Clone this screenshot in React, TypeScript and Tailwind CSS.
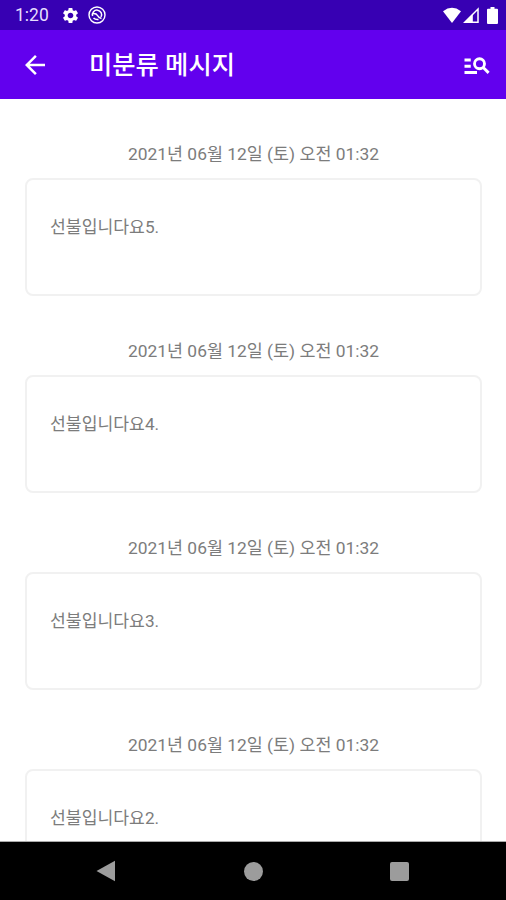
import { MdArrowBack, MdSettings } from 'react-icons/md';

type TMessage = {
    id: number;
    date: string;
    body: string;
};

const messages: TMessage[] = [
    { id: 5, date: '2021년 06월 12일 (토) 오전 01:32', body: '선불입니다요5.' },
    { id: 4, date: '2021년 06월 12일 (토) 오전 01:32', body: '선불입니다요4.' },
    { id: 3, date: '2021년 06월 12일 (토) 오전 01:32', body: '선불입니다요3.' },
    { id: 2, date: '2021년 06월 12일 (토) 오전 01:32', body: '선불입니다요2.' },
];

const StatusBar = () => {
    return (
        <div className="flex h-[30px] shrink-0 items-center bg-[#3700b3] pl-[15px] pr-2 text-white">
            <span className="w-[46px] pt-0.5 text-[17.5px] leading-none text-[#e6deff]">1:20</span>
            <MdSettings className="h-[19px] w-[19px]" />
            <svg className="ml-2 h-[18px] w-[18px]" viewBox="0 0 18 18" fill="none" stroke="currentColor">
                <circle cx="9" cy="9" r="8" strokeWidth="1.4" />
                <path d="M4.6 10A4.6 4.6 0 1 1 13 11" strokeWidth="1.5" />
                <path d="M5 7.5Q8.5 7.3 9.5 9.5T13.5 12.5M5.5 12q2 2 5 1.5" strokeWidth="1.5" />
            </svg>
            <div className="ml-auto flex items-center">
                <svg className="h-[17px] w-[18px]" viewBox="0 0 18 17" fill="currentColor">
                    <path d="M0 4.2Q9-2.6 18 4.2L9 16z" />
                </svg>
                <svg className="ml-0.5 h-[17px] w-4" viewBox="0 0 16 17">
                    <path d="M1.8 15.2 15 2v13.2z" fill="none" stroke="currentColor" strokeWidth="1.5" />
                    <path d="M1 15.6 9.8 6.8v8.8z" fill="currentColor" />
                </svg>
                <svg className="ml-2 h-[17px] w-[11px]" viewBox="0 0 11 17" fill="currentColor">
                    <path d="M3.5 0h4v1.7H10q1 0 1 1V16q0 1-1 1H1q-1 0-1-1V2.7q0-1 1-1h2.5z" />
                </svg>
            </div>
        </div>
    );
};

const Toolbar = () => {
    return (
        <header className="flex h-[69px] shrink-0 items-center bg-[#6200ee] pl-5 pr-3.5 text-white">
            <button aria-label="Back">
                <MdArrowBack className="h-[30px] w-[30px]" />
            </button>
            <h1 className="ml-[39px] pt-[3px] text-[25.3px] font-medium leading-none">미분류 메시지</h1>
            <button aria-label="Search" className="ml-auto">
                <svg className="h-[30px] w-[30px]" viewBox="0 0 24 24" fill="none" stroke="currentColor" strokeWidth="2.3">
                    <path d="M2 8h5M2 13h5M2 18h10" />
                    <circle cx="14" cy="11" r="4" />
                    <path d="m17 14 4.3 4.3" />
                </svg>
            </button>
        </header>
    );
};

const MessageItem = ({ message }: { message: TMessage }) => {
    return (
        <li className="h-[197px] shrink-0 pl-[25px] pr-6 pt-[43px]">
            <p className="h-9 text-center text-[17.4px] leading-6">{message.date}</p>
            <div className="h-[118px] rounded-lg border-2 border-[#f1f1f1] px-[23px] pt-[35px]">
                <p className="text-[17.2px] leading-6">{message.body}</p>
            </div>
        </li>
    );
};

const NavigationBar = () => {
    return (
        <nav className="flex h-[59px] shrink-0 items-center border-t border-[#aaa] bg-black pl-[96px] pr-[96px] text-[#9c9c9c]">
            <svg className="h-[22px] w-[20px]" viewBox="0 0 20 22" fill="currentColor">
                <path d="M.5 11 19 .7v20.6z" />
            </svg>
            <span className="mx-auto h-[19px] w-[19px] rounded-full bg-[#9c9c9c]" />
            <span className="mr-px h-[19px] w-[19px] rounded-xs bg-[#9c9c9c]" />
        </nav>
    );
};

const App = () => {
    return (
        <div className="flex h-[900px] w-[506px] flex-col overflow-hidden bg-white font-[Roboto,'Noto_Sans_CJK_KR',sans-serif]">
            <StatusBar />
            <Toolbar />
            <main className="min-h-0 flex-1 overflow-hidden text-[#7c7c7c]">
                <ul className="flex flex-col">
                    {messages.map((message) => (
                        <MessageItem key={message.id} message={message} />
                    ))}
                </ul>
            </main>
            <NavigationBar />
        </div>
    );
};

export default App;
